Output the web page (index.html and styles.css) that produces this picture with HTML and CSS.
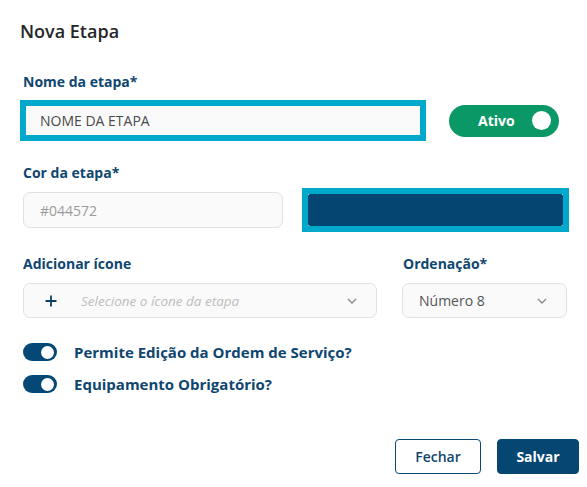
FILE: index.html
```html
<!DOCTYPE html>
<html lang="pt-BR">
<head>
<meta charset="utf-8">
<title>Nova Etapa</title>
<link rel="stylesheet" href="styles.css">
</head>
<body>
<div class="modal">
  <h1 class="title">Nova Etapa</h1>

  <div class="label l1">Nome da etapa*</div>
  <div class="row row1">
    <div class="name-field">NOME DA ETAPA</div>
    <div class="status-toggle"><span>Ativo</span><span class="knob"></span></div>
  </div>

  <div class="label l2">Cor da etapa*</div>
  <div class="row row2">
    <div class="field color-field">#044572</div>
    <div class="swatch"><div class="swatch-inner"></div></div>
  </div>

  <div class="row labels3">
    <div class="label icon-label">Adicionar ícone</div>
    <div class="label">Ordenação*</div>
  </div>
  <div class="row row3">
    <div class="field select icon-select">
      <svg class="plus" width="12" height="12" viewBox="0 0 12 12"><path d="M6 0.5v11M0.5 6h11" stroke="#0b3f66" stroke-width="1.8" fill="none"/></svg>
      <span class="placeholder">Selecione o ícone da etapa</span>
      <svg class="chev" width="10" height="6" viewBox="0 0 10 6"><path d="M1 1l4 4 4-4" stroke="#8a8a8a" stroke-width="1.4" fill="none"/></svg>
    </div>
    <div class="field select order-select">
      <span class="value">Número 8</span>
      <svg class="chev" width="10" height="6" viewBox="0 0 10 6"><path d="M1 1l4 4 4-4" stroke="#8a8a8a" stroke-width="1.4" fill="none"/></svg>
    </div>
  </div>

  <div class="switch-row sw1"><span class="switch"><span class="dot"></span></span><span class="switch-text">Permite Edição da Ordem de Serviço?</span></div>
  <div class="switch-row sw2"><span class="switch"><span class="dot"></span></span><span class="switch-text">Equipamento Obrigatório?</span></div>

  <div class="actions">
    <button class="btn btn-outline">Fechar</button>
    <button class="btn btn-primary">Salvar</button>
  </div>
</div>
</body>
</html>
```

FILE: styles.css
```css
* { box-sizing: border-box; }
html, body { margin: 0; padding: 0; background: #ffffff; }
body { font-family: "Open Sans", "Noto Sans", sans-serif; color: #333; }

.modal { padding: 19px 8px 0 23px; width: 587px; }

.title {
  margin: 0 0 0 -3px;
  font-size: 18px;
  line-height: 24px;
  font-weight: 600;
  color: #262626;
}

.label {
  font-size: 14px;
  line-height: 20px;
  font-weight: 700;
  color: #0f4670;
}
.l1 { margin-top: 29px; }
.l2 { margin-top: 22px; }

.row { display: flex; align-items: center; }
.row1 { margin-top: 8px; height: 41px; }
.row2 { margin-top: 5px; height: 44px; }
.labels3 { margin-top: 22px; }
.row3 { margin-top: 9px; }

.name-field {
  margin-left: -3px;
  width: 406px;
  height: 41px;
  border: 6px solid #00a9cc;
  background: #f9f9f9;
  font-size: 14px;
  color: #4a4a4a;
  padding-left: 14px;
  display: flex;
  align-items: center;
}

.status-toggle {
  margin-left: 23px;
  width: 110px;
  height: 32px;
  border-radius: 16px;
  background: #0a9966;
  display: flex;
  align-items: center;
  justify-content: space-between;
  padding: 0 8px 0 29px;
  color: #fff;
  font-weight: 700;
  font-size: 14px;
}
.status-toggle .knob {
  width: 19px; height: 19px; border-radius: 50%; background: #fff;
}

.field {
  height: 36px;
  border: 1px solid #dfe1e4;
  border-radius: 7px;
  background: #fafafa;
  font-size: 14px;
  display: flex;
  align-items: center;
}
.color-field { width: 260px; padding-left: 16px; color: #9a9a9a; }

.swatch {
  margin-left: 19px;
  width: 267px;
  height: 44px;
  border: 6px solid #00a9cc;
  background: #fff;
}
.swatch-inner { width: 100%; height: 100%; background: #044572; border-radius: 2px; }

.icon-label { width: 380px; }

.select { height: 35px; position: relative; }
.icon-select { width: 354px; padding-left: 21px; }
.icon-select .placeholder {
  margin-left: 24px;
  font-style: italic;
  font-size: 13.5px;
  color: #bdbdbd;
}
.icon-select .chev { margin-left: auto; margin-right: 19px; }
.order-select { margin-left: 25px; width: 165px; padding-left: 16px; color: #555; }
.order-select .chev { margin-left: auto; margin-right: 19px; }

.switch-row { display: flex; align-items: center; height: 22px; }
.sw1 { margin-top: 23px; }
.sw2 { margin-top: 10px; }
.switch {
  width: 34px; height: 18px; border-radius: 9px; background: #064875;
  display: flex; align-items: center; justify-content: flex-end; padding-right: 3px;
}
.switch .dot { width: 13px; height: 13px; border-radius: 50%; background: #fff; }
.switch-text {
  margin-left: 17px;
  font-size: 15px;
  font-weight: 700;
  color: #0f4670;
}

.actions { display: flex; justify-content: flex-end; gap: 16px; margin-top: 44px; }
.btn {
  height: 35px;
  border-radius: 4px;
  font-family: "Open Sans", "Noto Sans", sans-serif;
  font-size: 14px;
  cursor: pointer;
}
.btn-outline { width: 86px; background: #fff; border: 1px solid #0b4872; color: #0f4670; font-weight: 600; }
.btn-primary { width: 82px; background: #054672; border: 1px solid #054672; color: #fff; font-weight: 700; }
```
